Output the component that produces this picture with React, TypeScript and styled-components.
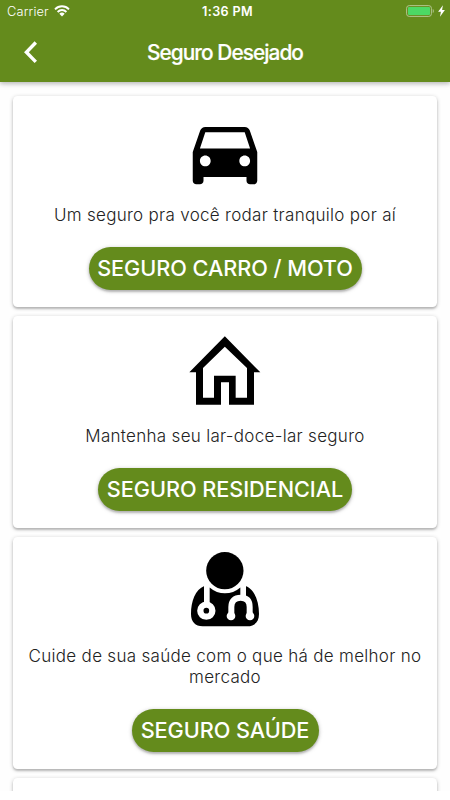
import React from "react";
import styled, { createGlobalStyle } from "styled-components";

const GREEN = "#648b1c";

const GlobalStyle = createGlobalStyle`
  *, *::before, *::after { box-sizing: border-box; }
  html, body { margin: 0; padding: 0; background: #fff; overflow: hidden; }
  body { font-family: Inter, "Liberation Sans", sans-serif; }
`;

const Screen = styled.div`
  width: 450px;
  height: 791px;
  display: flex;
  flex-direction: column;
  overflow: hidden;
  background: #fefefe;
`;

const Header = styled.header`
  flex: none;
  height: 82px;
  background: ${GREEN};
  color: #fff;
  box-shadow: 0 2px 4px rgba(0, 0, 0, 0.2), 0 1px 8px rgba(0, 0, 0, 0.1);
  z-index: 1;
`;

const StatusBar = styled.div`
  height: 22px;
  padding: 0 5px 0 7px;
  display: grid;
  grid-template-columns: 1fr auto 1fr;
  align-items: center;
  font-size: 12.6px;
`;

const Carrier = styled.div`
  display: flex;
  align-items: center;
  gap: 5px;
  font-weight: 300;
  font-size: 12.8px;
  letter-spacing: 0.15px;
`;

const Clock = styled.div`
  font-weight: 600;
  letter-spacing: 0.35px;
  padding-left: 3px;
`;

const Power = styled.div`
  display: flex;
  justify-content: flex-end;
  align-items: center;
  gap: 3px;
`;

const NavBar = styled.div`
  height: 60px;
  padding: 0 13px;
  display: grid;
  grid-template-columns: 36px 1fr 36px;
  align-items: center;
`;

const BackButton = styled.button`
  width: 36px;
  height: 36px;
  padding: 0;
  border: 0;
  background: none;
  display: flex;
  align-items: center;
  justify-content: center;
  color: inherit;
`;

const Title = styled.h1`
  margin: 0;
  text-align: center;
  font-size: 20.8px;
  font-weight: 500;
  letter-spacing: -0.93px;
  -webkit-text-stroke: 0.2px #fff;
`;

const List = styled.main`
  flex: 1;
  padding: 13.5px 13px 0;
  display: flex;
  flex-direction: column;
  gap: 8.8px;
`;

const Card = styled.section`
  flex: none;
  display: flex;
  flex-direction: column;
  align-items: center;
  padding: 13.3px 13px 17.3px;
  border-radius: 4.5px;
  background: #fff;
  box-shadow: 0 2px 2px rgba(0, 0, 0, 0.17), 0 1px 4px rgba(0, 0, 0, 0.22);
`;

const IconSlot = styled.div`
  width: 90px;
  height: 86px;
  display: flex;
  align-items: center;
  justify-content: center;
  svg { display: block; flex: none; }
`;

const Description = styled.p`
  margin: 10.4px 0 21.2px;
  font-size: 17px;
  line-height: 20.6px;
  text-align: center;
  letter-spacing: 0.3px;
  color: #222;
  font-weight: 300;
`;

const PillButton = styled.button<{ $width: number }>`
  width: ${(p) => p.$width}px;
  height: 43px;
  padding: 0;
  border: 0;
  border-radius: 22px;
  background: ${GREEN};
  color: #fff;
  font-family: inherit;
  font-size: 21.7px;
  font-weight: 500;
  letter-spacing: -0.06px;
  white-space: nowrap;
  box-shadow: 0 2px 2px rgba(0, 0, 0, 0.16), 0 1px 4px rgba(0, 0, 0, 0.26);
`;

const CarIcon = () => (
  <svg width="86" height="86" viewBox="0 0 24 24">
    <path d="M18.92 6.01C18.72 5.42 18.16 5 17.5 5h-11c-.66 0-1.21.42-1.42 1.01L3 12v8c0 .55.45 1 1 1h1c.55 0 1-.45 1-1v-1h12v1c0 .55.45 1 1 1h1c.55 0 1-.45 1-1v-8l-2.08-5.99zM6.5 16c-.83 0-1.5-.67-1.5-1.5S5.67 13 6.5 13s1.5.67 1.5 1.5S7.33 16 6.5 16zm11 0c-.83 0-1.5-.67-1.5-1.5s.67-1.5 1.5-1.5 1.5.67 1.5 1.5-.67 1.5-1.5 1.5zM5 11l1.5-4.5h11L19 11H5z" />
  </svg>
);

const HouseIcon = () => (
  <svg width="90" height="86" viewBox="0 0 270 258">
    <path
      fillRule="evenodd"
      d="M134.5 22 241 130H222V227H147V160H123V227H48V130H28ZM134.500 53 69 117V206H102V140H167V206H201V117Z"
    />
  </svg>
);

const DoctorIcon = () => (
  <svg width="90" height="86" viewBox="0 0 270 258">
    <circle cx="134.5" cy="62" r="56" />
    <path d="M73 108C46 118 33 154 33 192C33 215 46 229 68 229H202C224 229 237 215 237 192C237 154 224 118 197 108L180 113A68 68 0 0 1 90 113Z" />
    <g fill="none" stroke="#fff">
      <path strokeWidth="17" d="M80.500 102V160M189.500 102V140" />
      <circle cx="79" cy="182" r="18" strokeWidth="19" />
      <path strokeWidth="18" d="M154 196V171C154 153 164 143 182 143S209 153 209 171V196" />
    </g>
    <circle cx="153" cy="198" r="13" fill="#fff" />
    <circle cx="210" cy="198" r="13" fill="#fff" />
  </svg>
);

const WifiIcon = () => (
  <svg width="16" height="12" viewBox="0 0 16 12" fill="none" stroke="#fff" strokeWidth="1.9">
    <path d="M1 4.300C5 .3 11 .3 15 4.300M3.600 7C6.200 4.400 9.800 4.400 12.400 7" />
    <path d="M5.300 8.700C6.900 7.200 9.100 7.200 10.700 8.700L8 11.500Z" fill="#fff" stroke="none" />
  </svg>
);

const BatteryIcon = () => (
  <svg width="29" height="12" viewBox="0 0 29 12">
    <rect x=".6" y=".6" width="24.800" height="10.800" rx="2.600" fill="none" stroke="#b2c58e" />
    <rect x="2" y="2" width="22" height="8" rx="1" fill="#4cd964" />
    <path d="M26.700 4C28.500 4.500 28.500 7.500 26.700 8Z" fill="#a2b977" />
  </svg>
);

const BoltIcon = () => (
  <svg width="7" height="12" viewBox="0 0 7 12" fill="#fff">
    <path d="M4.900.3.1 6.800H2.900L2 11.700 6.900 5H4.100Z" />
  </svg>
);

const BackIcon = () => (
  <svg width="16" height="24" viewBox="0 0 16 24" fill="none" stroke="#fff" strokeWidth="3.400">
    <path d="M12.800 2.500 3.400 12.200 12.800 21.900" />
  </svg>
);

const insurances = [
  {
    icon: <CarIcon />,
    text: "Um seguro pra você rodar tranquilo por aí",
    action: "SEGURO CARRO / MOTO",
    width: 273,
  },
  {
    icon: <HouseIcon />,
    text: "Mantenha seu lar-doce-lar seguro",
    action: "SEGURO RESIDENCIAL",
    width: 254,
  },
  {
    icon: <DoctorIcon />,
    text: "Cuide de sua saúde com o que há de melhor no mercado",
    action: "SEGURO SAÚDE",
    width: 187,
  },
];

export default function App() {
  return (
    <>
      <GlobalStyle />
      <Screen>
        <Header>
          <StatusBar>
            <Carrier>
              Carrier <WifiIcon />
            </Carrier>
            <Clock>1:36 PM</Clock>
            <Power>
              <BatteryIcon />
              <BoltIcon />
            </Power>
          </StatusBar>
          <NavBar>
            <BackButton aria-label="Voltar">
              <BackIcon />
            </BackButton>
            <Title>Seguro Desejado</Title>
          </NavBar>
        </Header>
        <List>
          {insurances.map((item) => (
            <Card key={item.action}>
              <IconSlot>{item.icon}</IconSlot>
              <Description>{item.text}</Description>
              <PillButton $width={item.width}>{item.action}</PillButton>
            </Card>
          ))}
          <Card />
        </List>
      </Screen>
    </>
  );
}
